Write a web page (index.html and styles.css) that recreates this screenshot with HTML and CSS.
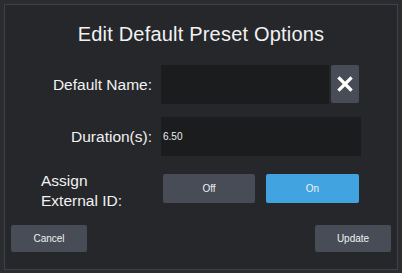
FILE: index.html
```html
<!DOCTYPE html>
<html>
<head>
<meta charset="utf-8">
<link rel="stylesheet" href="styles.css">
</head>
<body>
<div class="dialog">
  <h1 class="title">Edit Default Preset Options</h1>
  <div class="row row-name">
    <label class="label">Default Name:</label>
    <div class="field">
      <div class="input input-name"></div>
      <button class="btn btn-clear" aria-label="Clear">
        <svg width="16" height="16" viewBox="0 0 16 16"><path d="M2.5 2.5 L13.5 13.5 M13.5 2.5 L2.5 13.5" stroke="#ffffff" stroke-width="3.2" stroke-linecap="square" fill="none"/></svg>
      </button>
    </div>
  </div>
  <div class="row row-duration">
    <label class="label">Duration(s):</label>
    <div class="field">
      <div class="input input-duration">6.50</div>
    </div>
  </div>
  <div class="row row-assign">
    <label class="label label-left">Assign<br>External ID:</label>
    <div class="field toggle">
      <button class="btn btn-off">Off</button>
      <button class="btn btn-on">On</button>
    </div>
  </div>
  <div class="footer">
    <button class="btn btn-footer">Cancel</button>
    <button class="btn btn-footer">Update</button>
  </div>
</div>
</body>
</html>
```
FILE: styles.css
```css
html, body {
  margin: 0;
  padding: 0;
  background: #2a2c30;
}
body {
  width: 402px;
  height: 273px;
  overflow: hidden;
  font-family: "Liberation Sans", Arial, sans-serif;
  color: #f2f2f2;
}
.dialog {
  box-sizing: border-box;
  margin: 4px;
  width: 394px;
  height: 266px;
  border: 1px solid #3e4147;
  background: #25272b;
  padding: 17px 6px 0 0;
  display: flex;
  flex-direction: column;
}
.title {
  margin: 0;
  font-weight: normal;
  font-size: 20px;
  line-height: 24px;
  letter-spacing: 0.2px;
  text-align: center;
  padding-left: 6px;
}
.row {
  display: grid;
  grid-template-columns: 147px 200px;
  column-gap: 9px;
  align-items: center;
}
.row-name { margin-top: 19px; height: 39px; }
.row-duration { margin-top: 13px; height: 39px; }
.row-assign { margin-top: 15px; align-items: start; }
.label {
  font-size: 15.5px;
  text-align: right;
  line-height: 20px;
}
.label-left {
  text-align: left;
  padding-left: 36px;
}
.field {
  display: flex;
  height: 100%;
  gap: 2px;
}
.input {
  background: #1b1c1e;
  height: 39px;
  box-sizing: border-box;
}
.input-name { width: 168px; }
.input-duration {
  width: 200px;
  font-size: 10px;
  line-height: 39px;
  padding-left: 2px;
  color: #ececec;
}
.btn {
  border: none;
  margin: 0;
  padding: 0;
  font-family: "Liberation Sans", Arial, sans-serif;
  font-size: 10px;
  color: #f0f0f0;
  border-radius: 2px;
  background: #474c56;
  display: flex;
  align-items: center;
  justify-content: center;
}
.btn-clear {
  width: 28px;
  height: 38px;
}
.toggle {
  padding-left: 2px;
  padding-top: 3px;
  gap: 11px;
  height: auto;
}
.btn-off, .btn-on {
  width: 92px;
  height: 29px;
}
.btn-on {
  width: 93px;
  background: #42a3e1;
}
.footer {
  margin-top: 14px;
  padding-left: 6px;
  display: flex;
  justify-content: space-between;
}
.btn-footer {
  width: 76px;
  height: 27px;
}
```
